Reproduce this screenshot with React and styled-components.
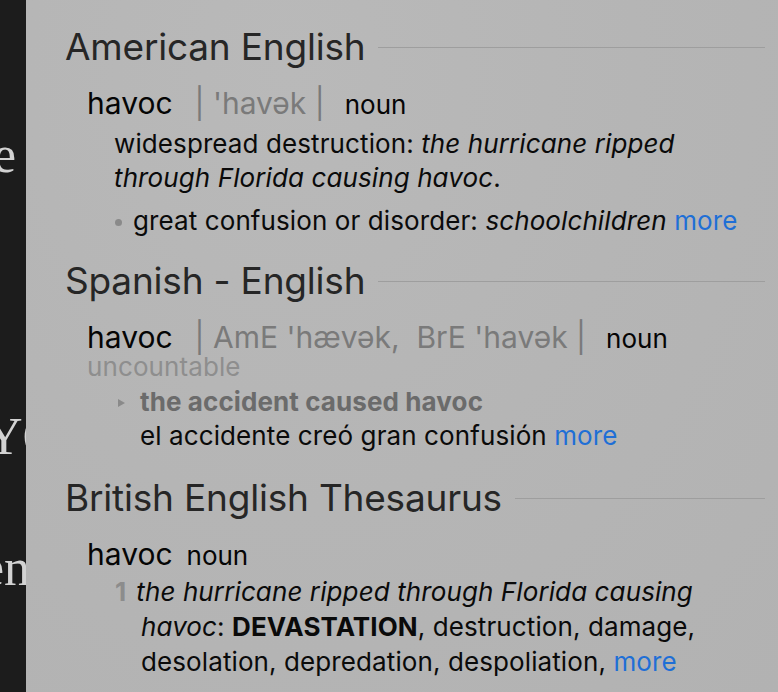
import React from 'react'
import styled, { createGlobalStyle } from 'styled-components'

const GlobalStyle = createGlobalStyle`
  html, body {
    margin: 0;
    padding: 0;
    background: #1c1c1c;
  }
  body {
    font-family: Inter, "Noto Sans", "Liberation Sans", sans-serif;
  }
`

export default function App() {
  return (
    <>
      <GlobalStyle />
      <Screen>
        <Backdrop>
          <PageLine $top={125} $shift={-7}>e</PageLine>
          <PageLine $top={222} $shift={-15}>YOU</PageLine>
          <PageLine $top={71} $shift={-19}>ene</PageLine>
        </Backdrop>
        <Panel>
          <Section $gap={0}>
            <SectionHead>
              <SectionTitle>American English</SectionTitle>
              <Rule />
            </SectionHead>
            <Headword>
              havoc<Pron>| 'havək |</Pron>
              <Pos>noun</Pos>
            </Headword>
            <Definition>
              widespread destruction: <em>the hurricane ripped</em>
              <br />
              <em>through Florida causing havoc</em>.
            </Definition>
            <SubSense>
              <Dot />
              great confusion or disorder: <em>schoolchildren</em>{' '}
              <More>more</More>
            </SubSense>
          </Section>

          <Section $gap={21}>
            <SectionHead>
              <SectionTitle>Spanish - English</SectionTitle>
              <Rule />
            </SectionHead>
            <Headword>
              havoc<Pron>| AmE 'hævək,&nbsp; BrE 'havək |</Pron>
              <Pos>noun</Pos>
            </Headword>
            <Label>uncountable</Label>
            <Example>
              <Triangle />
              <Phrase>the accident caused havoc</Phrase>
              <br />
              el accidente creó gran confusión <More>more</More>
            </Example>
          </Section>

          <Section $gap={23}>
            <SectionHead>
              <SectionTitle>British English Thesaurus</SectionTitle>
              <Rule />
            </SectionHead>
            <Headword>
              havoc<Pos $tight>noun</Pos>
            </Headword>
            <Numbered>
              <Num>1</Num>
              <em>the hurricane ripped through Florida causing</em>
              <br />
              <em>havoc</em>: <strong>DEVASTATION</strong>, destruction, damage,
              <br />
              desolation, depredation, despoliation, <More>more</More>
            </Numbered>
          </Section>
        </Panel>
      </Screen>
    </>
  )
}

const Screen = styled.div`
  display: flex;
  width: 778px;
  height: 692px;
  overflow: hidden;
`

const Backdrop = styled.div`
  width: 26px;
  flex: none;
  background: #1c1c1c;
  overflow: hidden;
  display: flex;
  flex-direction: column;
  font-family: "Liberation Serif", "DejaVu Serif", serif;
  font-size: 52px;
  line-height: 60px;
  color: #d2d2d2;
`

const PageLine = styled.div`
  white-space: nowrap;
  margin-top: ${(p) => p.$top}px;
  margin-left: ${(p) => p.$shift}px;
`

const Panel = styled.div`
  flex: 1;
  background: radial-gradient(
    ellipse at 35% 10%,
    #b9b9b9 0%,
    #b5b5b5 50%,
    #b2b2b2 100%
  );
  padding: 25px 13px 0 39px;
  color: #0a0a0a;
  font-size: 26px;
  letter-spacing: 0.1px;
`

const Section = styled.section`
  margin-top: ${(p) => p.$gap}px;
`

const SectionHead = styled.div`
  display: flex;
  align-items: center;
  gap: 13px;
  height: 44px;
`

const SectionTitle = styled.h2`
  margin: 0;
  font-size: 37px;
  font-weight: 400;
  line-height: 44px;
  color: #262626;
  letter-spacing: -0.2px;
  white-space: nowrap;
`

const Rule = styled.div`
  flex: 1;
  height: 1px;
  background: #9e9e9e;
`

const Headword = styled.div`
  margin: 16px 0 0 22px;
  font-size: 30px;
  line-height: 36px;
  letter-spacing: 0;
  color: #050505;
  white-space: nowrap;
`

const Pron = styled.span`
  color: #7a7a7a;
  margin-left: 22px;
`

const Pos = styled.span`
  font-size: 26px;
  margin-left: ${(p) => (p.$tight ? 14 : 20)}px;
  color: #050505;
`

const Definition = styled.p`
  margin: 4px 0 0 49px;
  line-height: 34px;
`

const SubSense = styled.p`
  margin: 9px 0 0 49px;
  line-height: 34px;
  white-space: nowrap;
`

const Dot = styled.span`
  display: inline-block;
  width: 7px;
  height: 7px;
  border-radius: 50%;
  background: #8a8a8a;
  margin: 0 11px 0 1px;
  vertical-align: 4px;
`

const More = styled.span`
  color: #1f6fd6;
`

const Label = styled.div`
  margin: -2px 0 0 22px;
  line-height: 24px;
  color: #8e8e8e;
`

const Example = styled.p`
  margin: 6px 0 0 75px;
  line-height: 34px;
  text-indent: -22px;
  white-space: nowrap;
`

const Triangle = styled.span`
  display: inline-block;
  width: 0;
  height: 0;
  border-top: 4px solid transparent;
  border-bottom: 4px solid transparent;
  border-left: 7px solid #8a8a8a;
  margin-right: 15px;
  vertical-align: 4px;
`

const Phrase = styled.span`
  font-weight: 700;
  color: #6b6b6b;
`

const Numbered = styled.p`
  margin: 0 0 0 76px;
  line-height: 35px;
  text-indent: -26px;
  white-space: nowrap;

  strong {
    font-weight: 700;
  }
`

const Num = styled.span`
  font-weight: 700;
  color: #8c8c8c;
  margin-right: 10px;
`
